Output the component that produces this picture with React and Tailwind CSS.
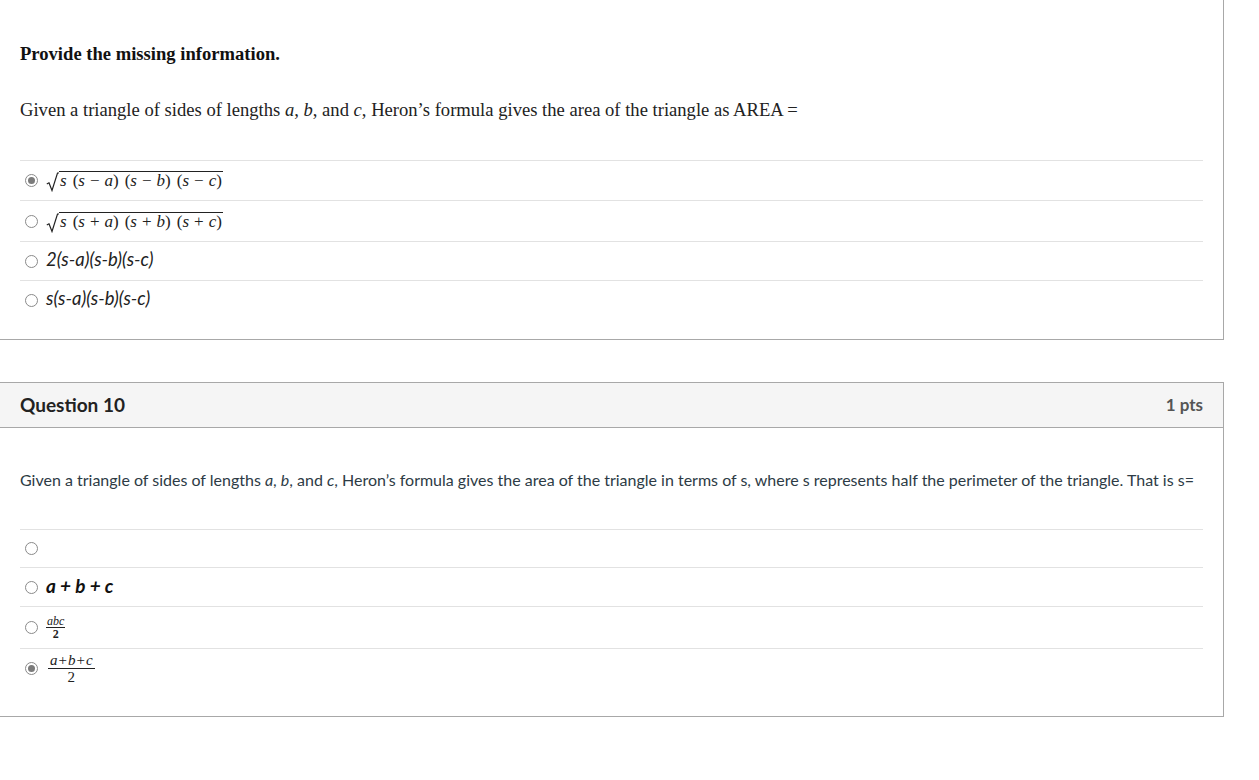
import React from "react";

const serif = { fontFamily: '"Liberation Serif", "Times New Roman", serif' };
const lato = { fontFamily: 'Lato, "Noto Sans", sans-serif' };

function Radio({ checked }) {
  return (
    <span className="inline-flex h-[13px] w-[13px] shrink-0 items-center justify-center rounded-full border border-[#8a8a8a] bg-white">
      {checked && <span className="h-[7px] w-[7px] rounded-full bg-[#7b7b7b]" />}
    </span>
  );
}

function Row({ checked, children, h }) {
  return (
    <div className={`flex items-center gap-[8px] border-t border-[#e2e2e2] pl-[5px] ${h}`}>
      <Radio checked={checked} />
      <div className="flex items-center">{children}</div>
    </div>
  );
}

const V = ({ children }) => <i>{children}</i>;
const Op = ({ children }) => <span className="mx-[5px]">{children}</span>;

function Sqrt({ sign }) {
  const grp = (v) => (
    <span className="ml-[6px]">
      (<V>s</V>
      <Op>{sign}</Op>
      <V>{v}</V>)
    </span>
  );
  return (
    <span className="inline-flex items-end text-[17px] text-[#222]" style={serif}>
      <svg width="13" height="20" viewBox="0 0 13 20" className="mb-[-2px]">
        <path d="M0.8 12 L3 10.8 L6 18.5 L11.5 1 L13 1" fill="none" stroke="#222" strokeWidth="1.2" />
      </svg>
      <span className="border-t border-[#222] pl-[1px] pr-[1px] leading-[18px]">
        <V>s</V>
        {grp("a")}
        {grp("b")}
        {grp("c")}
      </span>
    </span>
  );
}

export default function App() {
  return (
    <div className="min-h-[780px] w-[1259px] bg-white text-[#111]">
      {/* Card 1 */}
      <div className="w-[1224px] border-b border-r border-[#a8a8a8] px-[20px]">
        <div className="pt-[43px] text-[18.6px] font-bold leading-[22px]" style={serif}>
          Provide the missing information.
        </div>
        <div className="pt-[34px] text-[18.6px] leading-[22px] text-[#222]" style={serif}>
          Given a triangle of sides of lengths <i>a</i>, <i>b</i>, and <i>c</i>, Heron’s formula gives the area of the
          triangle as AREA =
        </div>
        <div className="mt-[39px] pb-[20px]">
          <Row checked h="h-[40px]">
            <Sqrt sign="−" />
          </Row>
          <Row h="h-[41px]">
            <Sqrt sign="+" />
          </Row>
          <Row h="h-[39px]">
            <span className="mt-[-3px] text-[18.5px] italic text-[#222]" style={lato}>2(s-a)(s-b)(s-c)</span>
          </Row>
          <Row h="h-[39px]">
            <span className="mt-[-3px] text-[18.5px] italic text-[#222]" style={lato}>s(s-a)(s-b)(s-c)</span>
          </Row>
        </div>
      </div>

      {/* Card 2 */}
      <div className="mt-[42px] w-[1224px] border-b border-r border-t border-[#a8a8a8]">
        <div className="flex h-[45px] items-center justify-between border-b border-[#a8a8a8] bg-[#f5f5f5] px-[20px]" style={lato}>
          <span className="text-[19px] font-bold text-[#222]">Question 10</span>
          <span className="text-[17px] font-bold text-[#555]">1 pts</span>
        </div>
        <div className="px-[20px]">
          <div className="pt-[42px] text-[16px] leading-[20px] text-[#2d3b45]" style={lato}>
            Given a triangle of sides of lengths <i>a</i>, <i>b</i>, and <i>c</i>, Heron’s formula gives the area of the
            triangle in terms of s, where s represents half the perimeter of the triangle. That is s=
          </div>
          <div className="mt-[39px] pb-[29px]">
            <Row h="h-[38px]"> </Row>
            <Row h="h-[39px]">
              <span className="mt-[-2px] text-[19px] font-bold italic text-[#111]" style={lato}>a + b + c</span>
            </Row>
            <Row h="h-[42px]">
              <span className="inline-flex flex-col items-center text-[12px] leading-[12px] text-[#222]" style={serif}>
                <span className="border-b border-[#222] px-[1px] italic">abc</span>
                <span className="font-bold">2</span>
              </span>
            </Row>
            <Row checked h="h-[39px]">
              <span className="ml-[2px] inline-flex flex-col items-center text-[15px] leading-[16px] text-[#222]" style={serif}>
                <span className="border-b border-[#222] px-[2px]">
                  <i>a</i>
                  <span className="mx-[1px]">+</span>
                  <i>b</i>
                  <span className="mx-[1px]">+</span>
                  <i>c</i>
                </span>
                <span>2</span>
              </span>
            </Row>
          </div>
        </div>
      </div>
    </div>
  );
}
